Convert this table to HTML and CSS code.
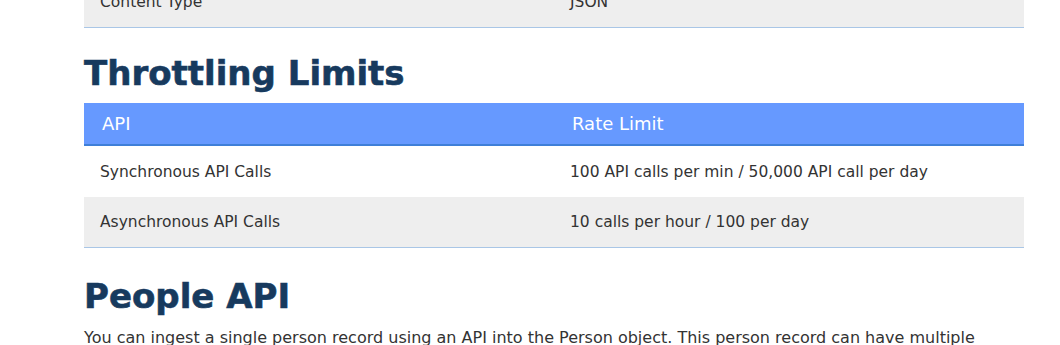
FILE: index.html
```html
<!DOCTYPE html>
<html lang="en">
<head>
<meta charset="utf-8">
<title>API Docs</title>
<link rel="stylesheet" href="styles.css">
</head>
<body>
<main class="doc">
  <table class="grid grid-first">
    <tbody>
      <tr class="alt"><td>Content Type</td><td>JSON</td></tr>
    </tbody>
  </table>

  <h2 class="section-title">Throttling Limits</h2>
  <table class="grid">
    <thead>
      <tr><th>API</th><th>Rate Limit</th></tr>
    </thead>
    <tbody>
      <tr><td>Synchronous API Calls</td><td>100 API calls per min / 50,000 API call per day</td></tr>
      <tr class="alt last"><td>Asynchronous API Calls</td><td>10 calls per hour / 100 per day</td></tr>
    </tbody>
  </table>

  <h2 class="section-title section-people">People API</h2>
  <p class="lead">You can ingest a single person record using an API into the Person object. This person record can have multiple</p>
</main>
</body>
</html>
```

FILE: styles.css
```css
html, body {
  margin: 0;
  padding: 0;
  background: #ffffff;
}
body {
  font-family: "DejaVu Sans", "Liberation Sans", sans-serif;
  color: #333333;
  overflow: hidden;
}
.doc {
  width: 940px;
  margin-left: 84px;
}
.grid {
  width: 100%;
  border-collapse: collapse;
  table-layout: fixed;
}
.grid-first {
  margin-top: -24px;
}
.grid-first td {
  height: 50px;
  border-bottom: 1px solid #a9c6e6;
}
.grid th {
  background: #6699ff;
  color: #ffffff;
  font-weight: 400;
  font-size: 18px;
  text-align: left;
  height: 41px;
  padding: 0 18px;
  border-bottom: 2px solid #3f7fd8;
}
.grid td {
  font-size: 15.5px;
  padding: 0 16px;
  height: 51px;
}
.grid tr.alt td {
  background: #eeeeee;
}
.grid tr.last td {
  height: 50px;
  border-bottom: 1px solid #a9c6e6;
}
.section-title {
  margin: 0;
  color: #173a5e;
  font-size: 34px;
  font-weight: 700;
  line-height: 40px;
  padding: 25px 0 10px;
  -webkit-text-stroke: 0.6px #173a5e;
}
.section-people {
  padding: 28px 0 10px;
}
.lead {
  margin: 0;
  font-size: 16px;
  line-height: 24px;
}
```
